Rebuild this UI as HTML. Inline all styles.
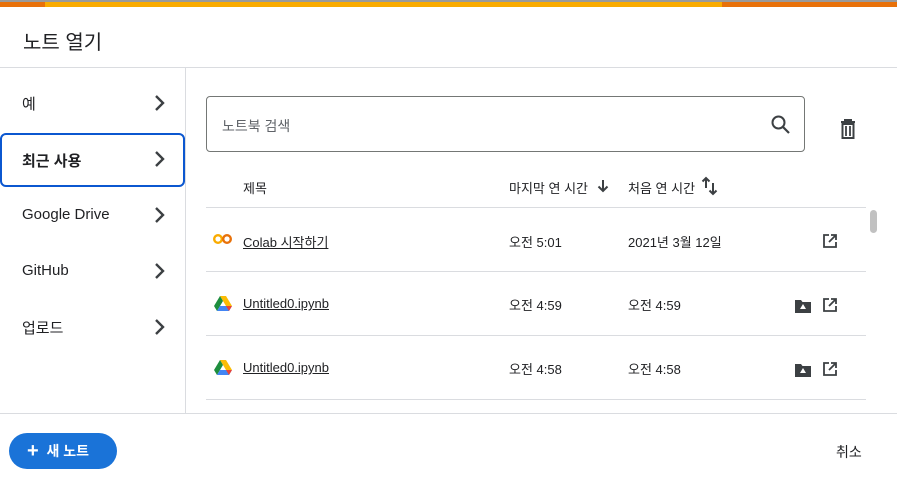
<!DOCTYPE html>
<html><head><meta charset="utf-8"><style>
*{margin:0;padding:0;box-sizing:border-box}
body{width:897px;height:487px;overflow:hidden;background:#fff;font-family:"Liberation Sans","Noto Sans CJK KR",sans-serif;color:#202124;position:relative}
.a{position:absolute}
.t{font-size:13px;color:#202124}
.nav{position:absolute;left:22px;font-size:15px;color:#202124}
.chev{position:absolute;left:153px}
.hl{position:absolute;left:206px;width:660px;height:1px;background:#dadce0}
.lnk{text-decoration:underline;font-size:13px}
</style></head><body>
<div class="a" style="left:0;top:0;width:897px;height:2px;background:#9a9a9a"></div>
<div class="a" style="left:0;top:2px;width:45px;height:5px;background:#e8710a"></div>
<div class="a" style="left:45px;top:2px;width:677px;height:5px;background:#f9ab00"></div>
<div class="a" style="left:722px;top:2px;width:175px;height:5px;background:#e8710a"></div>
<div class="a" style="left:23px;top:26px;font-size:20px;color:#202124">노트 열기</div>
<div class="a" style="left:0;top:67px;width:897px;height:1px;background:#dadce0"></div>
<div class="a" style="left:185px;top:68px;width:1px;height:345px;background:#dadce0"></div>
<div class="a" style="left:0;top:413px;width:897px;height:1px;background:#dadce0"></div>

<div class="nav" style="top:93px">예</div>
<div class="a" style="left:0;top:133px;width:185px;height:54px;border:2px solid #0b57d0;border-radius:6px"></div>
<div class="nav" style="top:150px;font-weight:bold">최근 사용</div>
<div class="nav" style="top:206px">Google Drive</div>
<div class="nav" style="top:262px">GitHub</div>
<div class="nav" style="top:317px">업로드</div>
<svg class="chev" style="top:94px" width="14" height="18" viewBox="0 0 14 18"><path d="M3 2l7 7-7 7" fill="none" stroke="#3c4043" stroke-width="2.4"/></svg>
<svg class="chev" style="top:150px" width="14" height="18" viewBox="0 0 14 18"><path d="M3 2l7 7-7 7" fill="none" stroke="#3c4043" stroke-width="2.4"/></svg>
<svg class="chev" style="top:206px" width="14" height="18" viewBox="0 0 14 18"><path d="M3 2l7 7-7 7" fill="none" stroke="#3c4043" stroke-width="2.4"/></svg>
<svg class="chev" style="top:262px" width="14" height="18" viewBox="0 0 14 18"><path d="M3 2l7 7-7 7" fill="none" stroke="#3c4043" stroke-width="2.4"/></svg>
<svg class="chev" style="top:318px" width="14" height="18" viewBox="0 0 14 18"><path d="M3 2l7 7-7 7" fill="none" stroke="#3c4043" stroke-width="2.4"/></svg>

<div class="a" style="left:206px;top:96px;width:599px;height:56px;border:1px solid #747775;border-radius:4px"></div>
<div class="a" style="left:222px;top:116px;font-size:14px;color:#5f6368">노트북 검색</div>
<svg class="a" style="left:770px;top:114px" width="22" height="22" viewBox="0 0 22 22"><circle cx="8.5" cy="8.5" r="6" fill="none" stroke="#3c4043" stroke-width="2"/><path d="M13 13l6 6" stroke="#3c4043" stroke-width="2.2"/></svg>
<svg class="a" style="left:838px;top:118px" width="20" height="22" viewBox="0 0 20 22"><path d="M3 4h14M7 4V2h6v2" fill="none" stroke="#3c4043" stroke-width="2"/><path d="M4.5 6h11v14h-11z" fill="none" stroke="#3c4043" stroke-width="2"/><path d="M8 8v10M12 8v10" stroke="#3c4043" stroke-width="1.8"/></svg>

<div class="a t" style="left:243px;top:178px">제목</div>
<div class="a t" style="left:509px;top:178px">마지막 연 시간</div>
<svg class="a" style="left:596px;top:178px" width="14" height="16" viewBox="0 0 14 16"><path d="M7 2v11M2.5 8.5L7 13l4.5-4.5" fill="none" stroke="#3c4043" stroke-width="2"/></svg>
<div class="a t" style="left:628px;top:178px">처음 연 시간</div>
<svg class="a" style="left:701px;top:176px" width="18" height="20" viewBox="0 0 18 20"><path d="M5 12V2M1.5 5.5L5 2l3.5 3.5M12 7v11M8.5 14.5L12 18l3.5-3.5" fill="none" stroke="#3c4043" stroke-width="2"/></svg>

<div class="hl" style="top:207px"></div>
<div class="hl" style="top:271px"></div>
<div class="hl" style="top:335px"></div>
<div class="hl" style="top:399px"></div>
<div class="a" style="left:870px;top:210px;width:7px;height:23px;background:#c1c1c1;border-radius:4px"></div>

<svg class="a" style="left:213px;top:233px" width="20" height="12" viewBox="0 0 20 12"><circle cx="5" cy="6" r="3.8" fill="none" stroke="#f9ab00" stroke-width="2.4"/><circle cx="14" cy="6" r="3.8" fill="none" stroke="#e8710a" stroke-width="2.4"/></svg>
<div class="a lnk" style="left:243px;top:232px">Colab 시작하기</div>
<div class="a t" style="left:509px;top:232px">오전 5:01</div>
<div class="a t" style="left:628px;top:232px">2021년 3월 12일</div>

<svg class="a" style="left:214px;top:296px" width="18" height="15" viewBox="0 0 18 15"><path d="M6 0h6l6 10h-6z" fill="#fbbc04"/><path d="M6 0l3 5-6 10L0 10z" fill="#1e8e3e"/><path d="M3 15h12l3-5H6z" fill="#4285f4"/><path d="M12 10h6l-3 5z" fill="#ea4335"/></svg>
<div class="a lnk" style="left:243px;top:296px">Untitled0.ipynb</div>
<div class="a t" style="left:509px;top:295px">오전 4:59</div>
<div class="a t" style="left:628px;top:295px">오전 4:59</div>

<svg class="a" style="left:214px;top:360px" width="18" height="15" viewBox="0 0 18 15"><path d="M6 0h6l6 10h-6z" fill="#fbbc04"/><path d="M6 0l3 5-6 10L0 10z" fill="#1e8e3e"/><path d="M3 15h12l3-5H6z" fill="#4285f4"/><path d="M12 10h6l-3 5z" fill="#ea4335"/></svg>
<div class="a lnk" style="left:243px;top:360px">Untitled0.ipynb</div>
<div class="a t" style="left:509px;top:359px">오전 4:58</div>
<div class="a t" style="left:628px;top:359px">오전 4:58</div>

<svg class="a" style="left:822px;top:233px" width="16" height="16" viewBox="0 0 16 16"><path d="M7 2H2v12h12V9M9 2h5v5M14 2L7 9" fill="none" stroke="#3c4043" stroke-width="1.8"/></svg>
<svg class="a" style="left:822px;top:297px" width="16" height="16" viewBox="0 0 16 16"><path d="M7 2H2v12h12V9M9 2h5v5M14 2L7 9" fill="none" stroke="#3c4043" stroke-width="1.8"/></svg>
<svg class="a" style="left:822px;top:361px" width="16" height="16" viewBox="0 0 16 16"><path d="M7 2H2v12h12V9M9 2h5v5M14 2L7 9" fill="none" stroke="#3c4043" stroke-width="1.8"/></svg>
<svg class="a" style="left:795px;top:299px" width="16" height="14" viewBox="0 0 16 14"><path d="M0 1h6l1.5 2H16v11H0z" fill="#3c4043"/><path d="M8 5l3 5H5z" fill="#fff"/></svg>
<svg class="a" style="left:795px;top:363px" width="16" height="14" viewBox="0 0 16 14"><path d="M0 1h6l1.5 2H16v11H0z" fill="#3c4043"/><path d="M8 5l3 5H5z" fill="#fff"/></svg>

<div class="a" style="left:9px;top:433px;width:108px;height:36px;background:#1a73d8;border-radius:18px;color:#fff;font-size:14px;font-weight:bold;line-height:36px;padding-left:18px"><span style="font-size:20px;vertical-align:-1px">+</span>&nbsp; 새 노트</div>
<div class="a" style="left:836px;top:442px;font-size:14px;color:#202124">취소</div>
</body></html>
